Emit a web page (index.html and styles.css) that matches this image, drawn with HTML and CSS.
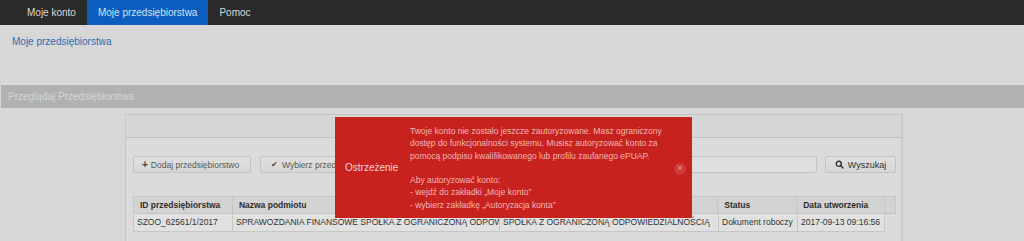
FILE: index.html
```html
<!DOCTYPE html>
<html lang="pl">
<head>
<meta charset="utf-8">
<title>Moje przedsiębiorstwa</title>
<link rel="stylesheet" href="styles.css">
</head>
<body>
<nav class="navbar">
  <a class="nav-item">Moje konto</a>
  <a class="nav-item active">Moje przedsiębiorstwa</a>
  <a class="nav-item">Pomoc</a>
</nav>
<div class="breadcrumb"><a class="crumb">Moje przedsiębiorstwa</a></div>
<section class="panel">
  <div class="panel-heading">Przeglądaj Przedsiębiorstwa</div>
  <div class="panel-body">
    <div class="box">
      <div class="box-header"></div>
      <div class="box-body">
        <div class="toolbar">
          <button class="btn btn-add"><span class="plus">+</span> Dodaj przedsiębiorstwo</button>
          <button class="btn btn-select"><span class="check">✔</span> Wybierz przedsiębiorstwo</button>
          <input class="search-input" type="text">
          <button class="btn btn-search">
            <svg class="search-icon" viewBox="0 0 12 12" width="9" height="9"><circle cx="5" cy="5" r="3.4" fill="none" stroke="#333" stroke-width="1.8"/><path d="M7.4 7.4 L10.6 10.6" stroke="#333" stroke-width="2" stroke-linecap="round"/></svg>
            Wyszukaj
          </button>
        </div>
        <div class="table">
          <div class="thead">
            <div class="th c-id">ID przedsiębiorstwa</div>
            <div class="th c-name">Nazwa podmiotu</div>
            <div class="th c-form"></div>
            <div class="th c-status">Status</div>
            <div class="th c-date">Data utworzenia</div>
            <div class="th c-gutter"></div>
          </div>
          <div class="trow">
            <div class="td c-id">SZOO_62561/1/2017</div>
            <div class="td c-name"><span class="clip">SPRAWOZDANIA FINANSOWE SPÓŁKA Z OGRANICZONĄ ODPOWIE</span></div>
            <div class="td c-form">SPÓŁKA Z OGRANICZONĄ ODPOWIEDZIALNOŚCIĄ</div>
            <div class="td c-status">Dokument roboczy</div>
            <div class="td c-date">2017-09-13 09:16:56</div>
          </div>
        </div>
      </div>
    </div>
  </div>
</section>
<div class="alert">
  <div class="alert-title">Ostrzeżenie</div>
  <div class="alert-text">
    Twoje konto nie zostało jeszcze zautoryzowane. Masz ograniczony<br>
    dostęp do funkcjonalności systemu. Musisz autoryzować konto za<br>
    pomocą podpisu kwalifikowanego lub profilu zaufanego ePUAP.<br>
    <br>
    Aby autoryzować konto:<br>
    - wejdź do zakładki „Moje konto”<br>
    - wybierz zakładkę „Autoryzacja konta”
  </div>
  <div class="alert-close">×</div>
</div>
</body>
</html>
```
FILE: styles.css
```css
* { box-sizing: border-box; }
html, body { margin: 0; padding: 0; }
body {
  background: #d7d7d7;
  font-family: "Liberation Sans", Arial, sans-serif;
  width: 1024px;
  height: 241px;
  overflow: hidden;
  position: relative;
}
.navbar {
  display: flex;
  height: 25px;
  background: #2b2b2b;
  padding-left: 16px;
}
.nav-item {
  padding: 0 11px;
  line-height: 25px;
  font-size: 10px;
  color: #d9d9d9;
}
.nav-item.active {
  background: #0b5dbe;
  color: #d6e2f2;
}
.breadcrumb {
  height: 58px;
  padding: 11px 12px 0;
  font-size: 10px;
  line-height: 12px;
}
.crumb { color: #2b6cb0; }
.panel {
  border-top: 2px solid #dcdcdc;
  margin-left: 1px;
}
.panel-heading {
  height: 23px;
  line-height: 23px;
  background: #b1b1b1;
  color: #d6d6d6;
  font-size: 10px;
  padding-left: 7px;
}
.panel-body {
  padding: 6px 121px 0 123px;
  border-left: 1px solid #dcdcdc;
}
.box {
  border: 1px solid #c5c5c5;
  border-right: 2px solid #c9c9c9;
  background: #dbdbdb;
  height: 140px;
}
.box-header {
  height: 23px;
  border-bottom: 1px solid #c3c3c3;
  background: #d6d6d6;
}
.box-body {
  padding: 18px 5px 0 7px;
}
.toolbar {
  display: flex;
  align-items: center;
  height: 17px;
}
.btn {
  height: 17px;
  border: 1px solid #c3c3c3;
  border-radius: 2px;
  background: linear-gradient(#e0e0e0, #d6d6d6);
  font-family: "Liberation Sans", Arial, sans-serif;
  font-size: 8.5px;
  color: #595959;
  padding: 0 8px;
  display: flex;
  align-items: center;
  gap: 3px;
  white-space: nowrap;
}
.btn-add { width: 118px; }
.plus { font-weight: bold; color: #444; font-size: 10px; }
.btn-select { width: 118px; margin-left: 9px; padding-left: 10px; overflow: hidden; }
.check { color: #444; font-size: 8px; margin-right: 1px; }
.search-input {
  flex: 1;
  height: 17px;
  margin-left: 10px;
  border: 1px solid #c3c3c3;
  border-radius: 2px;
  background: #dfdfdf;
}
.btn-search {
  width: 71px;
  margin-left: 8px;
  color: #333;
  justify-content: center;
  padding: 0;
  gap: 4px;
  font-size: 9px;
}
.search-icon { display: block; }
.table {
  margin-top: 23px;
  font-size: 8.5px;
  color: #333;
}
.thead, .trow { display: flex; }
.th, .td {
  white-space: nowrap;
  overflow: hidden;
  border-left: 1px solid #c6c6c6;
}
.th {
  height: 18px;
  line-height: 17px;
  background: #d3d3d3;
  font-weight: bold;
  padding-left: 6px;
  border-top: 1px solid #c6c6c6;
  border-bottom: 1px solid #c6c6c6;
  color: #2e2e2e;
}
.td {
  height: 18px;
  line-height: 17px;
  background: #e1e1e1;
  padding-left: 3px;
  border-bottom: 1px solid #c6c6c6;
}
.clip { display: block; overflow: hidden; }
.c-id { width: 99px; }
.c-name { width: 267px; }
.c-form { width: 219px; }
.c-status { width: 79px; }
.c-date { width: 88px; border-right: 1px solid #c6c6c6; }
.th.c-date { border-right: none; }
.c-gutter { width: 12px; border-right: 1px solid #c6c6c6; padding: 0; }
.alert {
  position: absolute;
  left: 335px;
  top: 117px;
  width: 357px;
  height: 101px;
  background: #c8221e;
  display: flex;
  align-items: center;
}
.alert-title {
  width: 75px;
  padding-left: 10px;
  font-size: 10px;
  color: #f4d3d2;
}
.alert-text {
  flex: 1;
  font-size: 8.5px;
  line-height: 12.2px;
  color: #f1b7b4;
  padding-top: 1px;
}
.alert-close {
  width: 12px;
  height: 12px;
  border-radius: 50%;
  background: #cf3a35;
  color: #eba7a4;
  font-size: 9px;
  line-height: 11px;
  text-align: center;
  margin-right: 6px;
  margin-top: 2px;
}
```
